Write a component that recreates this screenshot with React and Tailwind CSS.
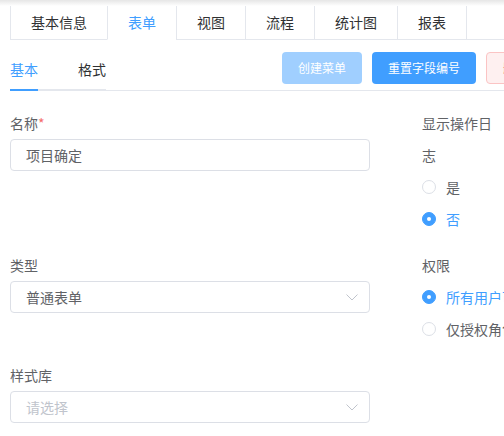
import React, { useState } from 'react';

const topTabs = ['基本信息', '表单', '视图', '流程', '统计图', '报表'];

const Radio = ({ label, checked, onClick }) => (
  <div
    className="flex items-center h-[32px] cursor-pointer whitespace-nowrap"
    onClick={onClick}
  >
    <span
      className={`w-[14px] h-[14px] rounded-full border flex items-center justify-center ${
        checked ? 'bg-[#409eff] border-[#409eff]' : 'bg-white border-[#dcdfe6]'
      }`}
    >
      {checked && <span className="w-[4px] h-[4px] rounded-full bg-white" />}
    </span>
    <span
      className={`ml-[10px] text-[14px] ${checked ? 'text-[#409eff]' : 'text-[#606266]'}`}
    >
      {label}
    </span>
  </div>
);

const SelectBox = ({ value, placeholder }) => (
  <div className="h-[32px] border border-[#dcdfe6] rounded-[4px] bg-white flex items-center justify-between pl-[15px] pr-[11px]">
    <span className={`text-[14px] ${value ? 'text-[#606266]' : 'text-[#c0c4cc]'}`}>
      {value || placeholder}
    </span>
    <svg width="12" height="7" viewBox="0 0 12 7" fill="none">
      <path d="M0.5 0.5L6 6L11.5 0.5" stroke="#c0c4cc" strokeWidth="1" />
    </svg>
  </div>
);

const App = () => {
  const [activeTab, setActiveTab] = useState('表单');
  const [subTab, setSubTab] = useState('基本');
  const [showLog, setShowLog] = useState(false);
  const [perm, setPerm] = useState('all');

  return (
    <div
      className="w-[504px] h-[436px] overflow-hidden bg-white"
      style={{ fontFamily: '"Noto Sans CJK SC", "Noto Sans", sans-serif' }}
    >
      <div className="w-[578px]">
        <div className="h-[6px] bg-gradient-to-b from-[#e6e6e6] to-white" />

        {/* 顶部页签 */}
        <div className="flex pl-[10px]">
          {topTabs.map((tab) => (
            <div
              key={tab}
              onClick={() => setActiveTab(tab)}
              className={`h-[34px] px-5 border-l border-[#e4e7ed] flex items-center text-[14px] cursor-pointer ${
                activeTab === tab
                  ? 'text-[#409eff] border-b border-b-white'
                  : 'text-[#303133] border-b'
              }`}
            >
              {tab}
            </div>
          ))}
          <div className="flex-1 h-[34px] border-l border-b border-[#e4e7ed]" />
        </div>

        {/* 子页签 + 操作按钮 */}
        <div className="ml-[10px] pr-[10px] pt-[9px] flex justify-between border-b border-[#e4e7ed]">
          <div className="flex border-b-2 border-[#e4e7ed] -mb-px">
            {['基本', '格式'].map((t, i) => (
              <div
                key={t}
                onClick={() => setSubTab(t)}
                className={`relative h-[40px] flex items-center text-[14px] cursor-pointer ${
                  i === 0 ? 'pr-5' : 'pl-5'
                } ${subTab === t ? 'text-[#409eff]' : 'text-[#303133]'}`}
              >
                {t}
                {subTab === t && (
                  <span
                    className={`absolute bottom-[-2px] h-[2px] bg-[#409eff] ${
                      i === 0 ? 'left-0 right-5' : 'left-5 right-0'
                    }`}
                  />
                )}
              </div>
            ))}
          </div>
          <div className="flex gap-[10px] pt-[3px]">
            <button className="h-[32px] px-[16px] rounded-[4px] bg-[#a0cfff] text-white text-[12px] cursor-not-allowed">
              创建菜单
            </button>
            <button className="h-[32px] px-[16px] rounded-[4px] bg-[#409eff] text-white text-[12px]">
              重置字段编号
            </button>
            <button className="h-[32px] px-[16px] rounded-[4px] bg-[#fef0f0] border border-[#fbc4c4] text-[#f56c6c] text-[12px]">
              删除表单
            </button>
          </div>
        </div>

        {/* 表单 */}
        <div className="grid grid-cols-[360px_1fr] gap-x-[52px] gap-y-[14px] pl-[10px] pt-[16px]">
          <div>
            <div className="leading-[32px] text-[14px] text-[#606266]">
              名称<span className="text-[#f56c6c]">*</span>
            </div>
            <div className="h-[32px] border border-[#dcdfe6] rounded-[4px] flex items-center px-[15px] text-[14px] text-[#606266]">
              项目确定
            </div>
          </div>
          <div>
            <div className="w-[80px] leading-[32px] text-[14px] text-[#606266]">
              显示操作日志
            </div>
            <Radio label="是" checked={showLog} onClick={() => setShowLog(true)} />
            <Radio label="否" checked={!showLog} onClick={() => setShowLog(false)} />
          </div>

          <div>
            <div className="leading-[32px] text-[14px] text-[#606266]">类型</div>
            <SelectBox value="普通表单" />
          </div>
          <div>
            <div className="w-[80px] leading-[32px] text-[14px] text-[#606266]">权限</div>
            <Radio label="所有用户可见" checked={perm === 'all'} onClick={() => setPerm('all')} />
            <Radio label="仅授权角色可见" checked={perm === 'role'} onClick={() => setPerm('role')} />
          </div>

          <div>
            <div className="leading-[32px] text-[14px] text-[#606266]">样式库</div>
            <SelectBox placeholder="请选择" />
          </div>
          <div />
        </div>
      </div>
    </div>
  );
};

export default App;
